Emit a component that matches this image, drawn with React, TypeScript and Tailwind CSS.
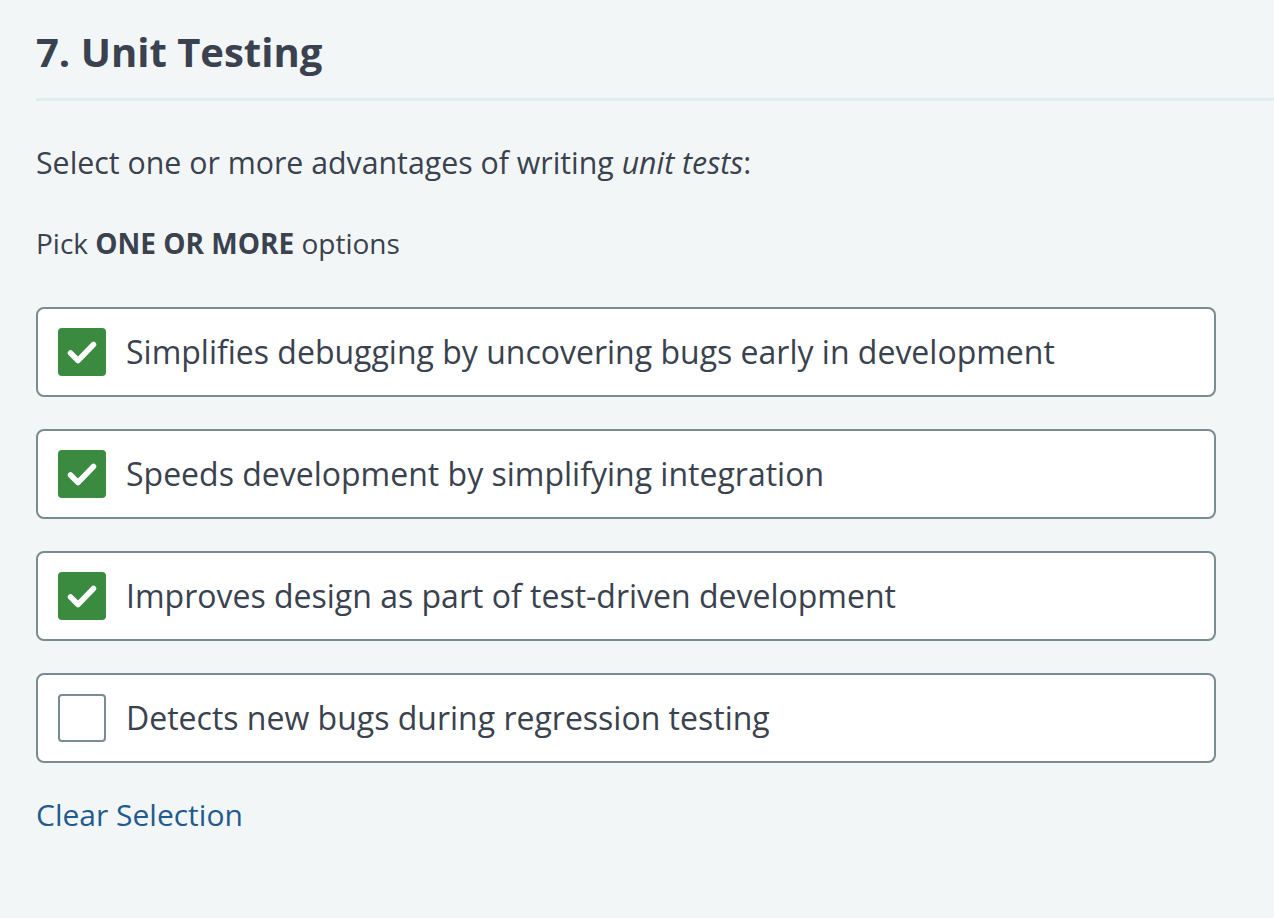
import { useState } from "react";

const options = [
    "Simplifies debugging by uncovering bugs early in development",
    "Speeds development by simplifying integration",
    "Improves design as part of test-driven development",
    "Detects new bugs during regression testing",
];

const Check = () => (
    <svg viewBox="0 0 48 48" className="w-12 h-12" fill="none">
        <path d="M12.5 25l7.5 7.5 15.5-16" stroke="white" strokeWidth="5.5" strokeLinecap="round" strokeLinejoin="round" />
    </svg>
);

export default function App() {
    const [checked, setChecked] = useState([true, true, true, false]);

    const toggle = (i: number) => setChecked(c => c.map((v, j) => (j === i ? !v : v)));

    return (
        <main className="min-h-screen bg-[#f3f6f7] text-[#39424e] font-['Open_Sans',sans-serif] pl-9 pt-[22px]">
            <h1 className="text-[40px] leading-[60px] font-bold">7. Unit Testing</h1>
            <div className="h-[3px] bg-[#e6ebed] mt-4" />

            <p className="text-[30.3px] leading-[40px] mt-[42px]">
                Select one or more advantages of writing <em>unit tests</em>:
            </p>
            <p className="text-[28px] leading-[40px] mt-10">
                Pick <strong className="font-bold">ONE OR MORE</strong> options
            </p>

            <div className="flex flex-col gap-8 mt-[44px] w-[1180px]">
                {options.map((label, i) => (
                    <label
                        key={label}
                        onClick={() => toggle(i)}
                        className="flex items-center gap-5 h-[90px] px-[20px] bg-white border-2 border-[#7a8b91] rounded-lg cursor-pointer"
                    >
                        {checked[i] ? (
                            <span className="w-12 h-12 rounded bg-[#3a8a40] flex items-center justify-center shrink-0">
                                <Check />
                            </span>
                        ) : (
                            <span className="w-12 h-12 rounded border-2 border-[#7a8b91] bg-white shrink-0" />
                        )}
                        <span className="text-[32px] leading-[40px]">{label}</span>
                    </label>
                ))}
            </div>

            <button
                onClick={() => setChecked([false, false, false, false])}
                className="mt-[32px] text-[30px] leading-[40px] text-[#1f5b8e]"
            >
                Clear Selection
            </button>
        </main>
    );
}
